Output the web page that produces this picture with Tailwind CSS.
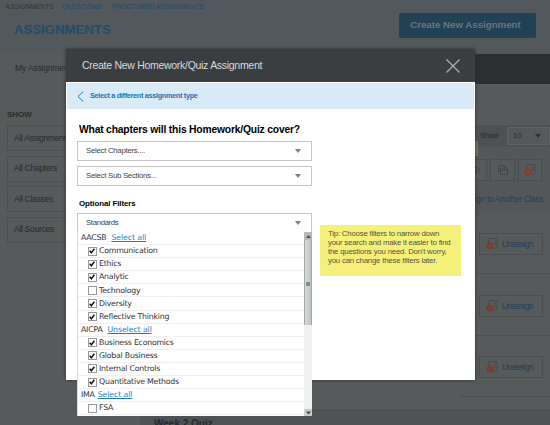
<!DOCTYPE html>
<html lang="en">

<head>
    <meta charset="UTF-8">
    <meta name="viewport" content="width=device-width, initial-scale=1.0">
    <title>Assignments</title>
    <script src="https://cdn.jsdelivr.net/npm/@tailwindcss/browser@4"></script>
</head>
<body class="relative h-[425px] w-[550px] overflow-hidden bg-[#565a5b] font-['Liberation_Sans',sans-serif] text-[#292c2e] whitespace-nowrap">
    <!-- page behind the dialog -->
    <header class="flex h-[54px] justify-between bg-[#52585c]">
        <div>
            <nav class="flex gap-[9px] pl-[5.5px] pt-[2px] text-[6.6px] leading-[10px] text-[#214a66]">
                <a href="#" class="text-[#303436]">ASSIGNMENTS</a>
                <a href="#">QUESTIONS</a>
                <a href="#" class="ml-[2px]">PROCTORED ASSIGNMENTS</a>
            </nav>
            <h1 class="mt-[9px] pl-[14px] text-[13.2px] leading-[18px] font-bold text-[#214d69]">ASSIGNMENTS</h1>
        </div>
        <button class="mt-[13px] mr-[14px] h-[25px] w-[137px] rounded-[2px] bg-[#204254] pr-1 text-[9.7px] font-bold text-[#6d757a]">Create New Assignment</button>
    </header>
    <div class="flex h-[30px] bg-[#2b2f31]">
        <div class="w-[90px] bg-[#565a5b] pt-[8px] pl-[15px] text-[8.6px] leading-3 tracking-[-0.2px]">My Assignments</div>
    </div>
    <div class="flex justify-between">
        <aside class="w-[90px] pt-[25px] pl-[7px] text-[8.6px] tracking-[-0.33px]">
            <h2 class="leading-3 text-[8px] font-bold tracking-normal">SHOW</h2>
            <div class="mt-[4px] flex flex-col gap-[4.6px]">
                <div class="flex h-[26px] items-center border border-[#4c5051] pl-[6px]">All Assignments</div>
                <div class="flex h-[26px] items-center border border-[#4c5051] pl-[6px]">All Chapters</div>
                <div class="flex h-[26px] items-center border border-[#4c5051] pl-[6px]">All Classes</div>
                <div class="flex h-[26px] items-center border border-[#4c5051] pl-[6px]">All Sources</div>
            </div>
        </aside>
        <section class="w-[90px] pt-[41px] text-[8.6px]">
            <div class="flex h-[22px] items-center bg-[#4e5053]">
                <div class="-mb-[9px] h-[15px] w-[18px] self-end bg-[#77764b]"></div>
                <span class="ml-[2px] text-[7.8px] tracking-[-0.2px]">Show</span>
                <div class="ml-[8px] flex h-[18px] w-[43px] items-center justify-between rounded-[1px] border border-[#606466] bg-[#54585a] pr-[8px] pl-[5px] text-[8px]">10
                    <svg class="h-[4px] w-[6px]" viewBox="0 0 6 4"><path d="M0 0h6L3 4z" fill="#2c3032"/></svg>
                </div>
            </div>
            <div class="h-[67px] bg-[#53575a]">
                <div class="flex justify-end gap-[3px] pt-[12px] pr-[8px]">
                    <div class="flex h-[22px] w-[24px] items-center justify-center border border-[#4a4e50] bg-[#565a5b]">
                        <svg class="h-[8px] w-[12px]" viewBox="0 0 12 8" fill="none" stroke="#3f4345"><path d="M1 4Q6 -2 11 4Q6 10 1 4z"/><circle cx="6" cy="4" r="1.5"/></svg>
                    </div>
                    <div class="flex h-[22px] w-[25px] items-center justify-center border border-[#4a4e50] bg-[#565a5b]">
                        <svg class="h-[10px] w-[10px]" viewBox="0 0 10 10" fill="none" stroke="#3f4345"><path d="M2.5 7H1.5Q.5 7 .5 6V1.5Q.5 .5 1.5 .5H6Q7 .5 7 1.5V2.5"/><rect x="2.5" y="3" width="7" height="6.5" rx="1"/><path d="M3 5h6"/></svg>
                    </div>
                    <div class="flex h-[22px] w-[24px] items-center justify-center border border-[#4a4e50] bg-[#565a5b]">
                        <svg class="h-[12px] w-[12px]" viewBox="0 0 12 12"><path d="M2.5 5V1.5Q2.5 .5 3.5 .5H10Q11 .5 11 1.5V9Q11 10 10 10H7M9 .5V7" fill="none" stroke="#454a4c"/><circle cx="4" cy="8" r="3.6" fill="#8a3a2c"/><path d="M2.5 8h3" stroke="#62666a"/></svg>
                    </div>
                </div>
                <div class="mt-[13px] flex justify-end pr-[7px] text-[8.2px] leading-3 tracking-[-0.25px] text-[#1d4058]">Assign to Another Class</div>
            </div>
            <div class="flex h-[60px] flex-col items-end border-b border-[#4c5052] pt-[19px] pr-[7px]">
                <div class="flex h-[22px] w-[64px] items-center gap-[4px] border border-[#4a4e50] pl-[6px] text-[8.4px] tracking-[-0.45px] text-[#1d4058]">
                    <svg class="h-[12px] w-[12px]" viewBox="0 0 12 12"><path d="M2.5 5V1.5Q2.5 .5 3.5 .5H10Q11 .5 11 1.5V9Q11 10 10 10H7M9 .5V7" fill="none" stroke="#454a4c"/><circle cx="4" cy="8" r="3.6" fill="#7e382d"/><path d="M2.5 8h3" stroke="#5a5e62"/></svg>Unassign</div>
            </div>
            <div class="flex h-[62px] flex-col items-end border-b border-[#4c5052] pt-[21px] pr-[7px]">
                <div class="flex h-[22px] w-[64px] items-center gap-[4px] border border-[#4a4e50] pl-[6px] text-[8.4px] tracking-[-0.45px] text-[#1d4058]">
                    <svg class="h-[12px] w-[12px]" viewBox="0 0 12 12"><path d="M2.5 5V1.5Q2.5 .5 3.5 .5H10Q11 .5 11 1.5V9Q11 10 10 10H7M9 .5V7" fill="none" stroke="#454a4c"/><circle cx="4" cy="8" r="3.6" fill="#7e382d"/><path d="M2.5 8h3" stroke="#5a5e62"/></svg>Unassign</div>
            </div>
            <div class="flex h-[61px] flex-col items-end border-b border-[#4c5052] pt-[20px] pr-[7px]">
                <div class="flex h-[22px] w-[64px] items-center gap-[4px] border border-[#4a4e50] pl-[6px] text-[8.4px] tracking-[-0.45px] text-[#1d4058]">
                    <svg class="h-[12px] w-[12px]" viewBox="0 0 12 12"><path d="M2.5 5V1.5Q2.5 .5 3.5 .5H10Q11 .5 11 1.5V9Q11 10 10 10H7M9 .5V7" fill="none" stroke="#454a4c"/><circle cx="4" cy="8" r="3.6" fill="#7e382d"/><path d="M2.5 8h3" stroke="#5a5e62"/></svg>Unassign</div>
            </div>
        </section>
    </div>
    <div class="absolute top-[409px] left-[140px] h-4 w-[410px] bg-[#4e5254] pt-[8px] pl-[14px] text-[10px] leading-[14px] font-bold text-[#25282a]">Week 2 Quiz</div>

    <!-- dialog -->
    <main class="absolute top-[49px] left-[66px] h-[331px] w-[409px] bg-white shadow-[0_0_3px_#2a2d2e]">
        <div class="flex h-[33px] items-center justify-between bg-[#3b3e40] pr-[15px] pl-[16px] text-[10.5px] tracking-[-0.29px] text-[#d8d9da]">Create New Homework/Quiz Assignment
            <svg class="h-[14px] w-[14px]" viewBox="0 0 14 14"><path d="M.5 .5l13 13M13.5 .5l-13 13" stroke="#b4b6b7" stroke-width="1.1"/></svg>
        </div>
        <div class="mx-px mt-px flex h-[26px] items-center gap-[6px] bg-[#d9ebf7] pl-[10px] text-[7.3px] font-bold tracking-[-0.32px] text-[#1b74b8]">
            <svg class="h-[11px] w-[7px]" viewBox="0 0 7 11"><path d="M6.3 .5L1 5.5l5.3 5" fill="none" stroke="#1b74b8" stroke-width="1"/></svg>
            Select a different assignment type
        </div>
        <div class="pl-[11px] text-black">
            <h2 class="mt-[14px] pl-[2px] text-[10.3px] leading-[14px] font-bold tracking-[-0.18px]">What chapters will this Homework/Quiz cover?</h2>
            <div class="mt-[4px] flex h-[20px] w-[235px] items-center justify-between border border-[#c6c6c6] pr-[10px] pl-[8px] text-[7.8px] tracking-[-0.27px] text-[#444]">Select Chapters....
                <svg class="h-[4px] w-[6px]" viewBox="0 0 6 4"><path d="M0 0h6L3 4z" fill="#808080"/></svg>
            </div>
            <div class="mt-[5px] flex h-[20px] w-[235px] items-center justify-between border border-[#c6c6c6] pr-[10px] pl-[8px] text-[7.8px] tracking-[-0.27px] text-[#444]">Select Sub Sections...
                <svg class="h-[4px] w-[6px]" viewBox="0 0 6 4"><path d="M0 0h6L3 4z" fill="#808080"/></svg>
            </div>
            <h3 class="mt-[11px] pl-[2px] text-[7.9px] leading-[14px] font-bold tracking-[-0.08px]">Optional Filters</h3>
            <div class="mt-[2px] flex h-[20px] w-[235px] items-center justify-between border border-[#c6c6c6] pr-[10px] pl-[8px] text-[7.8px] tracking-[-0.35px] text-[#444]">Standards
                <svg class="h-[4px] w-[6px]" viewBox="0 0 6 4"><path d="M0 0h6L3 4z" fill="#808080"/></svg>
            </div>
        </div>
        <div class="absolute top-[176px] left-[254px] h-[51px] w-[141px] bg-[#f5f07a] pt-[5px] pl-[8px] text-[7.8px] leading-[8.9px] tracking-[-0.2px] text-[#55553a]">
            Tip: Choose filters to narrow down<br>your search and make it easier to find<br>the questions you need. Don't worry,<br>you can change these filters later.
        </div>
    </main>

    <!-- open Standards list -->
    <div class="absolute top-[232px] left-[77px] flex h-[184px] w-[235px] overflow-hidden border-l border-[#ddd] bg-white font-['DejaVu_Sans',sans-serif] text-[7.8px] tracking-[-0.22px] text-[#333]">
        <div id="standards" class="flex-1"></div>
        <div class="flex w-[8px] flex-col bg-[#f0f0ee]">
            <div class="flex h-[8px] items-center justify-center bg-[#b5b8b9]"><svg class="h-[3px] w-[5px]" viewBox="0 0 5 3"><path d="M0 3h5L2.5 0z" fill="#555"/></svg></div>
            <div class="flex h-[85px] items-center justify-center border-x border-[#a2a6a7] bg-linear-to-r from-[#d8dadb] to-[#bfc3c5]"><div class="mt-[3px] h-[4px] w-[4px] bg-[#858a8c]"></div></div>
            <div class="mt-auto flex h-[7px] items-center justify-center bg-[#c9cccd]"><svg class="h-[4px] w-[5px]" viewBox="0 0 5 3"><path d="M0 0h5L2.5 3z" fill="#444"/></svg></div>
        </div>
    </div>

    <script>
        const standards = [
            { name: 'AACSB', action: 'Select all', gap: 'ml-[5px]', items: [['Communication', 1], ['Ethics', 1], ['Analytic', 1], ['Technology', 0], ['Diversity', 1], ['Reflective Thinking', 1]] },
            { name: 'AICPA', action: 'Unselect all', gap: 'ml-[5px]', items: [['Business Economics', 1], ['Global Business', 1], ['Internal Controls', 1], ['Quantitative Methods', 1]] },
            { name: 'IMA', action: 'Select all', gap: 'ml-[3px]', items: [['FSA', 0]] },
        ];

        const check = '<svg class="h-[6px] w-[6px]" viewBox="0 0 6 6"><path d="M.7 2.8L2.3 4.8L5.4 .8" fill="none" stroke="#111" stroke-width="1.4"/></svg>';

        document.getElementById('standards').innerHTML = standards.map(group => `
            <div class="flex h-[13.1px] items-center border-b border-[#f0f0f0] pl-[3px]">${group.name}<a href="#" class="${group.gap} tracking-[-0.1px] text-[#1a7fc4] underline">${group.action}</a></div>
            ${group.items.map(([label, checked]) => `
                <div class="flex h-[13.1px] items-center border-b border-[#f0f0f0] pl-[9.5px]">
                    <span class="mr-[2.5px] flex h-[9px] w-[9px] items-center justify-center border border-[#999] bg-white">${checked ? check : ''}</span>${label}
                </div>`).join('')}
        `).join('');
    </script>
</body>

</html>
